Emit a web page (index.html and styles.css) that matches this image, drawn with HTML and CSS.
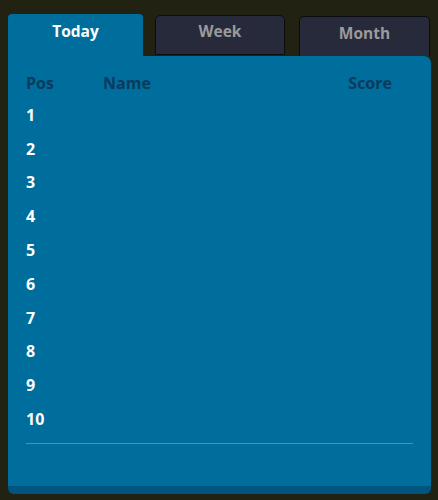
FILE: index.html
```html
<!DOCTYPE html>
<html>
<head>
<meta charset="utf-8">
<link rel="stylesheet" href="styles.css">
</head>
<body>
<div class="board">
  <div class="tabs">
    <div class="tab active">Today</div>
    <div class="tab week">Week</div>
    <div class="tab month">Month</div>
  </div>
  <div class="panel">
    <div class="table">
      <div class="row head"><span class="pos">Pos</span><span class="name">Name</span><span class="score">Score</span></div>
      <div class="row"><span class="pos">1</span><span class="name"></span><span class="score"></span></div>
      <div class="row"><span class="pos">2</span><span class="name"></span><span class="score"></span></div>
      <div class="row"><span class="pos">3</span><span class="name"></span><span class="score"></span></div>
      <div class="row"><span class="pos">4</span><span class="name"></span><span class="score"></span></div>
      <div class="row"><span class="pos">5</span><span class="name"></span><span class="score"></span></div>
      <div class="row"><span class="pos">6</span><span class="name"></span><span class="score"></span></div>
      <div class="row"><span class="pos">7</span><span class="name"></span><span class="score"></span></div>
      <div class="row"><span class="pos">8</span><span class="name"></span><span class="score"></span></div>
      <div class="row"><span class="pos">9</span><span class="name"></span><span class="score"></span></div>
      <div class="row"><span class="pos">10</span><span class="name"></span><span class="score"></span></div>
    </div>
    <div class="divider"></div>
  </div>
</div>
</body>
</html>
```
FILE: styles.css
```css
html, body {
  margin: 0;
  padding: 0;
  background: #222213;
  font-family: "Open Sans", "Noto Sans", sans-serif;
  font-weight: 700;
}
.board {
  padding: 14px 7px 6px 8px;
  width: 423px;
}
.tabs {
  display: flex;
  align-items: flex-end;
  height: 42px;
}
.tab {
  box-sizing: border-box;
  font-size: 15.5px;
  line-height: 20px;
  text-align: center;
  color: #9b9b9b;
}
.tab.active {
  width: 135px;
  height: 42px;
  padding-top: 7px;
  background: #006e9c;
  color: #ffffff;
  border-radius: 4px 4px 0 0;
}
.tab.week {
  margin-left: 12px;
  width: 130px;
  height: 40px;
  margin-bottom: 1px;
  padding-top: 5px;
  background: #272a3b;
  border: 1px solid #0c0d10;
  border-radius: 5px 5px 0 0;
}
.tab.month {
  margin-left: 14px;
  width: 131px;
  height: 40px;
  padding-top: 6px;
  background: #272a3b;
  border: 1px solid #0c0d10;
  border-bottom: none;
  border-radius: 5px 5px 0 0;
}
.panel {
  background: #006e9c;
  border-bottom: 8px solid #00557e;
  border-radius: 0 7px 6px 6px;
  padding: 11px 18px 42px 18px;
}
.row {
  display: grid;
  grid-template-columns: 77px 1fr auto;
  align-items: center;
  height: 33.8px;
  font-size: 16px;
  color: #ffffff;
}
.row.head {
  height: 31px;
  color: #0c3a5c;
}
.score {
  padding-right: 21px;
}
.divider {
  margin-top: 7px;
  height: 1px;
  background: #4893b8;
}
```
